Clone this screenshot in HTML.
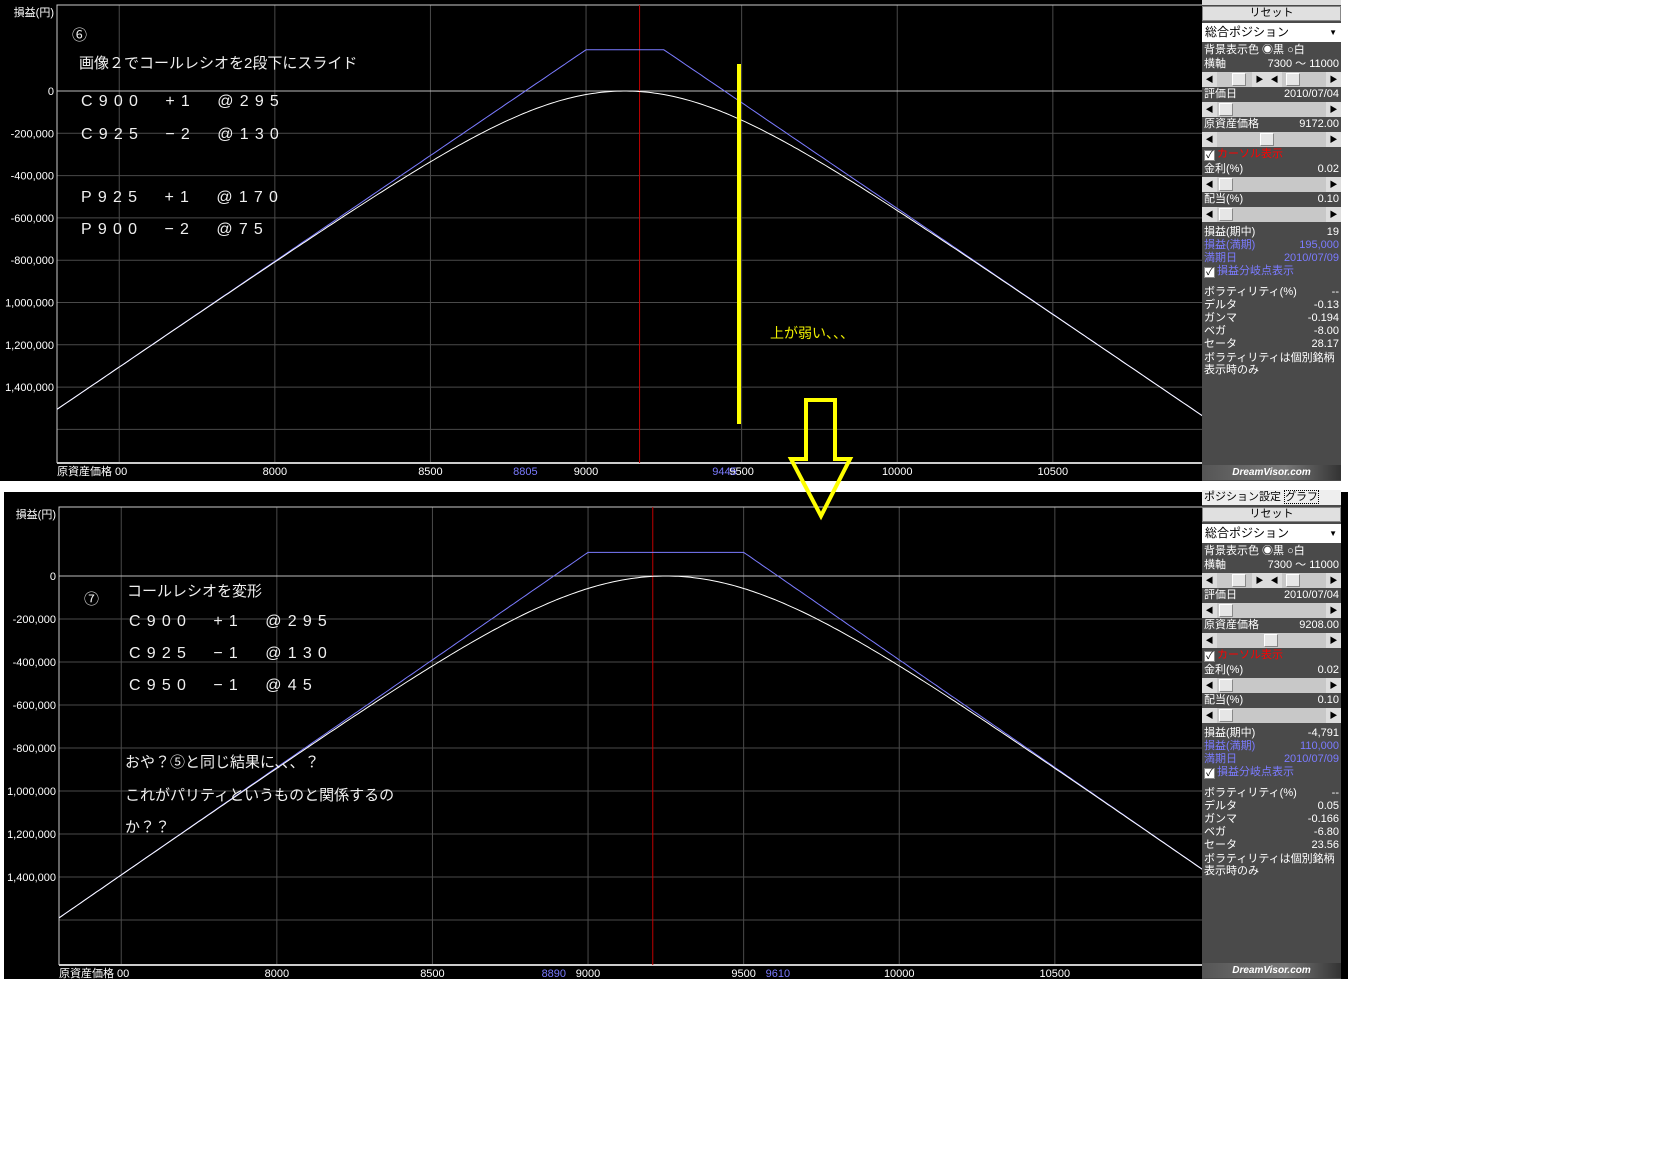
<!DOCTYPE html>
<html><head><meta charset="utf-8">
<style>
*{margin:0;padding:0;box-sizing:border-box}
body{width:1668px;height:1170px;background:#fff;position:relative;overflow:hidden;font-family:"Liberation Sans","Noto Sans CJK JP",sans-serif}
.abs{position:absolute}
.pn{position:absolute;width:139px;background:#4a4a4a;color:#fff;font-size:11px;line-height:14px}
.row{position:absolute;left:0;width:139px;height:15px;padding:0 2px;white-space:nowrap}
.row .r{position:absolute;right:2px;top:0}
.sb{position:absolute;left:0;width:139px;height:15px;background:#c8c8c8}
.sb .a{position:absolute;top:0;width:15px;height:15px;background:#dcdcdc;font-size:8px;line-height:15px;text-align:center;color:#000}
.sb .t{position:absolute;top:1px;width:14px;height:13px;background:#e6e6e6;border:1px solid #888;border-top-color:#fff;border-left-color:#fff}
.cb{display:inline-block;width:11px;height:11px;background:#fff;border:1px solid #888;color:#000;font-size:10px;line-height:9px;text-align:center;vertical-align:-1px;margin-right:2px}
.ov{position:absolute;color:#f0f0f0;white-space:pre;font-family:"Liberation Sans","Noto Sans CJK JP",sans-serif}
.code{font-size:16px;letter-spacing:6.2px}
</style></head><body>
<div class="abs" style="left:0;top:0;width:1341px;height:481px;background:#000"></div>
<div class="abs" style="left:4px;top:492px;width:1344px;height:487px;background:#000"></div>
<svg class="abs" style="left:0;top:0" width="1668" height="1170" id="sv"></svg>

<div class="ov" style="left:72px;top:24px;font-size:15px">⑥</div>
<div class="ov" style="left:79px;top:52px;font-size:15px">画像２でコールレシオを2段下にスライド</div>
<div class="ov code" style="left:81px;top:93px">C900  +1  @295</div>
<div class="ov code" style="left:81px;top:126px">C925  −2  @130</div>
<div class="ov code" style="left:81px;top:189px">P925  +1  @170</div>
<div class="ov code" style="left:81px;top:221px">P900  −2  @75</div>
<div class="ov" style="left:770px;top:324px;font-size:14px;color:#f0f000;font-family:'Noto Sans CJK JP',sans-serif;line-height:18px">上が弱い、、、</div>

<div class="ov" style="left:84px;top:588px;font-size:15px">⑦</div>
<div class="ov" style="left:127px;top:580px;font-size:15px">コールレシオを変形</div>
<div class="ov code" style="left:129px;top:613px">C900  +1  @295</div>
<div class="ov code" style="left:129px;top:645px">C925  −1  @130</div>
<div class="ov code" style="left:129px;top:677px">C950  −1  @45</div>
<div class="ov" style="left:125px;top:751px;font-size:15px">おや？⑤と同じ結果に、、、？</div>
<div class="ov" style="left:125px;top:784px;font-size:15px">これがパリティというものと関係するの</div>
<div class="ov" style="left:125px;top:816px;font-size:15px">か？？</div>

<div id="p1"></div><div id="p2"></div>

<script>
var sv=document.getElementById('sv'),h='';
function X(p,dx){return 57+dx+(p-7300)*0.3112;}
function chart(o){
 var dx=o.dx,z=o.z,s=o.s,top=o.top,bot=o.bot,L=57+dx,R=1202;
 for(var k=1;k<=8;k++){var y=z+k*s;if(y<bot)h+='<line x1="'+L+'" x2="'+R+'" y1="'+y+'" y2="'+y+'" stroke="#4a4a4a"/>';}
 [7500,8000,8500,9000,9500,10000,10500].forEach(function(p){var x=X(p,dx);h+='<line x1="'+x+'" x2="'+x+'" y1="'+top+'" y2="'+bot+'" stroke="#4a4a4a"/>';});
 h+='<line x1="'+L+'" x2="'+R+'" y1="'+z+'" y2="'+z+'" stroke="#bbb"/>';
 h+='<polyline points="'+L+','+bot+' '+L+','+top+' '+R+','+top+'" fill="none" stroke="#ccc"/>';
 h+='<line x1="'+L+'" x2="'+R+'" y1="'+bot+'" y2="'+bot+'" stroke="#ccc" stroke-width="2"/>';
 var rx=X(o.red,dx);h+='<line x1="'+rx+'" x2="'+rx+'" y1="'+top+'" y2="'+bot+'" stroke="#c00000"/>';
 function Y(v){return z-v/200000*s;}
 var bp='',wp='',A=(o.hi-o.lo)*500,k=A/Math.LN2;
 for(var p=7300;p<=11000;p+=10){
  var L1=(p-o.lo)*1000,L2=(o.hi-p)*1000;
  var b=Math.min(L1,L2,o.max);
  bp+=X(p,dx).toFixed(1)+','+Y(b).toFixed(1)+' ';
  var m=Math.min(L1,L2);
  var w=m-k*Math.log(Math.exp(-(L1-m)/k)+Math.exp(-(L2-m)/k));
  wp+=X(p,dx).toFixed(1)+','+Y(w).toFixed(1)+' ';
 }
 h+='<polyline points="'+bp+'" fill="none" stroke="#7b7bff"/>';
 h+='<polyline points="'+wp+'" fill="none" stroke="#fff"/>';
 var lbl=['0','-200,000','-400,000','-600,000','-800,000','1,000,000','1,200,000','1,400,000'];
 h+='<text x="'+(L-3)+'" y="'+(top+11)+'" text-anchor="end" fill="#fff" font-size="11">損益(円)</text>';
 lbl.forEach(function(t,i){h+='<text x="'+(L-3)+'" y="'+(z+i*s+4)+'" text-anchor="end" fill="#fff" font-size="11">'+t+'</text>';});
 var ly=bot+12;
 h+='<text x="'+L+'" y="'+ly+'" fill="#fff" font-size="11">原資産価格 00</text>';
 [8000,8500,9000,10000,10500].forEach(function(p){h+='<text x="'+X(p,dx)+'" y="'+ly+'" text-anchor="middle" fill="#fff" font-size="11">'+p+'</text>';});
 o.extra.forEach(function(e){h+='<text x="'+X(e[0],dx)+'" y="'+ly+'" text-anchor="middle" fill="'+e[2]+'" font-size="11">'+e[1]+'</text>';});
}
chart({dx:0,z:91,s:42.3,top:5,bot:463,red:9172,lo:8805,hi:9445,max:195000,extra:[[8805,'8805','#7b7bff'],[9500,'9500','#fff'],[9445,'9445','#7b7bff']]});
chart({dx:2,z:576,s:43,top:507,bot:965,red:9208,lo:8890,hi:9610,max:110000,extra:[[8890,'8890','#7b7bff'],[9500,'9500','#fff'],[9610,'9610','#7b7bff']]});
h+='<line x1="739" x2="739" y1="64" y2="424" stroke="#ffff00" stroke-width="4"/>';
h+='<polygon points="806,400 835,400 835,459 850,459 821,516 791,459 806,459" fill="none" stroke="#ffff00" stroke-width="4"/>';
sv.innerHTML=h;

function panel(id,oy,b,hh,v){
 var s='<div class="pn" style="left:1202px;top:'+oy+'px;height:'+hh+'px">';
 s+='<div class="abs" style="left:0;top:0;width:139px;height:5px;background:#ddd"></div>';
 if(oy){s+='<div class="abs" style="left:0;top:0;width:139px;height:15px;background:#eee;color:#000;font-size:11px;line-height:15px;padding-left:2px;white-space:nowrap;overflow:hidden">ポジション設定 <span style="border:1px dotted #000">グラフ</span></div>';}
 function R(y,l,r,st){s+='<div class="row" style="top:'+(y+b)+'px;'+(st||'')+'">'+l+'<span class="r">'+(r||'')+'</span></div>';}
 function SB(y,t){s+='<div class="sb" style="top:'+(y+b)+'px"><div class="a" style="left:0">◀</div><div class="a" style="right:0">▶</div><div class="t" style="left:'+t+'px"></div></div>';}
 s+='<div class="abs" style="left:0;top:'+(6+b)+'px;width:139px;height:15px;background:#e0e0e0;border:1px solid #888;color:#000;text-align:center;line-height:13px">リセット</div>';
 s+='<div class="abs" style="left:0;top:'+(23+b)+'px;width:139px;height:19px;background:#fff;color:#000;line-height:19px;padding-left:3px;font-size:12px">総合ポジション<span style="position:absolute;right:4px;font-size:8px">▼</span></div>';
 R(43,'背景表示色 ◉黒 ○白');
 R(57,'横軸','7300 ～ 11000');
 s+='<div class="sb" style="top:'+(72+b)+'px"><div class="a" style="left:0">◀</div><div class="t" style="left:30px"></div><div class="a" style="left:50px">▶</div><div class="a" style="left:65px">◀</div><div class="t" style="left:84px"></div><div class="a" style="right:0">▶</div></div>';
 R(87,'評価日','2010/07/04');SB(102,17);
 R(117,'原資産価格',v.price);SB(132,v.th);
 R(147,'<span class="cb">✓</span><span style="color:#f00">カーソル表示</span>');
 R(162,'金利(%)','0.02');SB(177,17);
 R(192,'配当(%)','0.10');SB(207,17);
 R(225,'損益(期中)',v.pl);
 R(238,'損益(満期)',v.mat,'color:#7b7bff');
 R(251,'満期日','2010/07/09','color:#7b7bff');
 R(264,'<span class="cb">✓</span>損益分岐点表示','','color:#7b7bff');
 R(285,'ボラティリティ(%)','--');
 R(298,'デルタ',v.d);R(311,'ガンマ',v.g);R(324,'ベガ',v.v);R(337,'セータ',v.t);
 R(351,'ボラティリティは個別銘柄');R(363,'表示時のみ');
 s+='<div class="abs" style="left:0;top:'+(hh-16)+'px;width:139px;height:15px;background:linear-gradient(90deg,#555,#777 60%,#333);color:#fff;font-size:10px;font-style:italic;font-weight:bold;text-align:center;line-height:15px">DreamVisor.com</div>';
 s+='</div>';
 document.getElementById(id).outerHTML=s;
}
panel('p1',0,0,481,{price:'9172.00',th:58,pl:'19',mat:'195,000',d:'-0.13',g:'-0.194',v:'-8.00',t:'28.17'});
panel('p2',490,11,489,{price:'9208.00',th:62,pl:'-4,791',mat:'110,000',d:'0.05',g:'-0.166',v:'-6.80',t:'23.56'});
</script>
</body></html>
